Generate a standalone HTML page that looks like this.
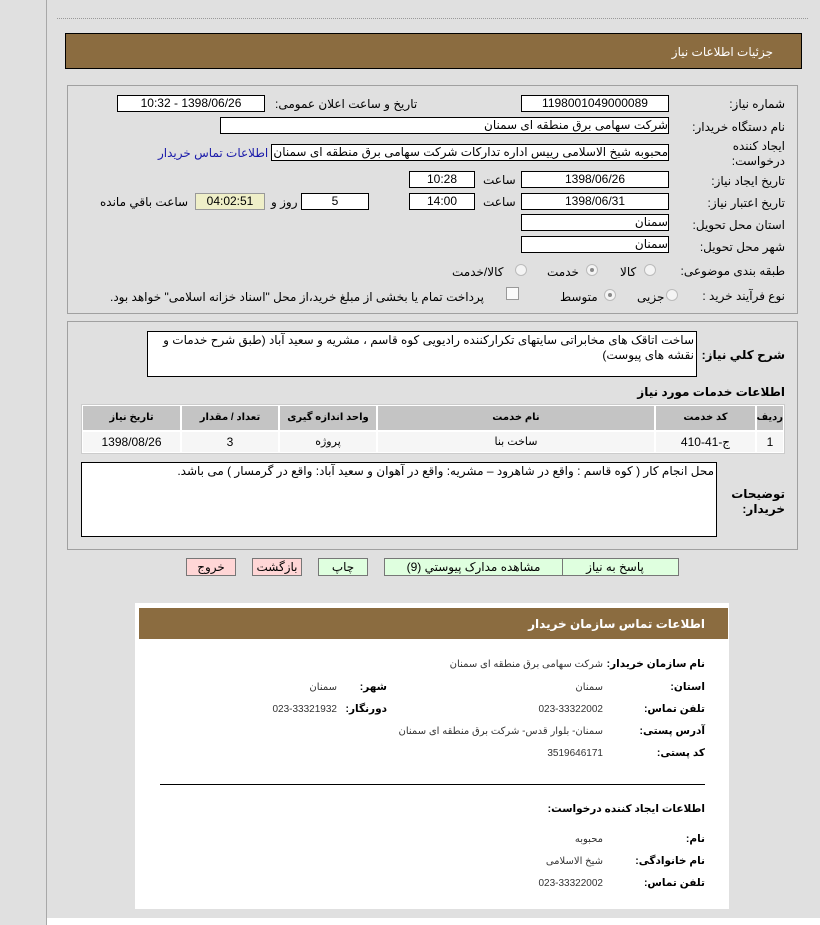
<!DOCTYPE html>
<html><head><meta charset="utf-8"><style>
*{margin:0;padding:0;box-sizing:border-box}
body{width:820px;height:925px;background:#e0e0e0;position:relative;overflow:hidden;font-family:"Liberation Sans","DejaVu Sans",sans-serif;font-size:12px;color:#000}
.a{position:absolute;white-space:nowrap}
.r{direction:rtl}
.f{position:absolute;background:#fff;border:1px solid #000;height:17px;line-height:15px;font-size:12px;white-space:nowrap;overflow:hidden;direction:rtl}
.c{text-align:center}
.lbl{position:absolute;right:35px;direction:rtl;font-size:12px;white-space:nowrap}
.rad{position:absolute;width:12px;height:12px;border-radius:50%;border:1px solid #bbb;background:#f4f4f4}
.rad.on:after{content:"";position:absolute;left:3px;top:3px;width:4px;height:4px;border-radius:50%;background:#888}
.btn{position:absolute;top:558px;height:18px;border:1px solid #777;background:#dfffdf;text-align:center;line-height:16px;font-size:12px;direction:rtl}
.pk{background:#ffd6d6}
.th{position:absolute;top:406px;height:24px;background:#c4c4c4;font-weight:bold;font-size:10px;text-align:center;line-height:24px;direction:rtl;overflow:hidden}
.td{position:absolute;top:432px;height:20px;background:#f6f6f6;text-align:center;line-height:20px;direction:rtl}
.b{font-weight:bold}
.k{position:absolute;font-weight:bold;font-size:10.5px;direction:rtl;white-space:nowrap}
.v{position:absolute;font-size:10px;color:#333;direction:rtl;white-space:nowrap}
</style></head><body>
<div class="a" style="left:46px;top:0;width:1px;height:925px;background:#a8a8a8"></div>
<div class="a" style="left:57px;top:18px;width:751px;border-top:1px dotted #999"></div>
<div class="a" style="left:65px;top:33px;width:737px;height:36px;background:#8b6c40;border:1px solid #000"></div>
<div class="a r" style="right:47px;top:45px;color:#fff;font-size:12px">جزئیات اطلاعات نیاز</div>

<div class="a" style="left:67px;top:85px;width:731px;height:229px;border:1px solid #a0a0a0"></div>
<div class="lbl" style="top:97px">شماره نیاز:</div>
<div class="f c" style="left:521px;top:95px;width:148px">1198001049000089</div>
<div class="a r" style="left:275px;top:97px">تاریخ و ساعت اعلان عمومی:</div>
<div class="f c" style="left:117px;top:95px;width:148px">1398/06/26 - 10:32</div>
<div class="lbl" style="top:120px">نام دستگاه خریدار:</div>
<div class="f" style="left:220px;top:117px;width:449px">شرکت سهامی برق منطقه ای سمنان</div>
<div class="lbl" style="top:139px;line-height:15px">ایجاد کننده<br>درخواست:</div>
<div class="f" style="left:271px;top:144px;width:398px">محبوبه شیخ الاسلامی رییس اداره تدارکات شرکت سهامی برق منطقه ای سمنان</div>
<div class="a r" style="left:158px;top:146px;color:#1a1aaa">اطلاعات تماس خریدار</div>
<div class="lbl" style="top:174px">تاریخ ایجاد نیاز:</div>
<div class="f c" style="left:521px;top:171px;width:148px">1398/06/26</div>
<div class="a r" style="left:483px;top:173px">ساعت</div>
<div class="f c" style="left:409px;top:171px;width:66px">10:28</div>
<div class="lbl" style="top:196px">تاریخ اعتبار نیاز:</div>
<div class="f c" style="left:521px;top:193px;width:148px">1398/06/31</div>
<div class="a r" style="left:483px;top:195px">ساعت</div>
<div class="f c" style="left:409px;top:193px;width:66px">14:00</div>
<div class="f c" style="left:301px;top:193px;width:68px">5</div>
<div class="a r" style="left:271px;top:195px">روز و</div>
<div class="f c" style="left:195px;top:193px;width:70px;background:#efefc8;border-color:#999">04:02:51</div>
<div class="a r" style="left:100px;top:195px">ساعت باقي مانده</div>
<div class="lbl" style="top:218px">استان محل تحویل:</div>
<div class="f" style="left:521px;top:214px;width:148px">سمنان</div>
<div class="lbl" style="top:240px">شهر محل تحویل:</div>
<div class="f" style="left:521px;top:236px;width:148px">سمنان</div>
<div class="lbl" style="top:264px">طبقه بندی موضوعی:</div>
<div class="rad" style="left:644px;top:264px"></div><div class="a r" style="left:620px;top:265px">کالا</div>
<div class="rad on" style="left:586px;top:264px"></div><div class="a r" style="left:547px;top:265px">خدمت</div>
<div class="rad" style="left:515px;top:264px"></div><div class="a r" style="left:452px;top:265px">کالا/خدمت</div>
<div class="lbl" style="top:289px">نوع فرآیند خرید :</div>
<div class="rad" style="left:666px;top:289px"></div><div class="a r" style="left:637px;top:290px">جزیی</div>
<div class="rad on" style="left:604px;top:289px"></div><div class="a r" style="left:560px;top:290px">متوسط</div>
<div class="a" style="left:506px;top:287px;width:13px;height:13px;border:1px solid #999;background:#fafafa"></div>
<div class="a r" style="left:110px;top:290px">پرداخت تمام یا بخشی از مبلغ خرید،از محل "اسناد خزانه اسلامی" خواهد بود.</div>

<div class="a" style="left:67px;top:321px;width:731px;height:229px;border:1px solid #a0a0a0"></div>
<div class="lbl b" style="top:348px;font-size:12px">شرح کلي نياز:</div>
<div class="a r" style="left:147px;top:331px;width:550px;height:46px;background:#fff;border:1px solid #000;white-space:normal;line-height:15px;padding:1px 2px">ساخت اتاقک های مخابراتی سایتهای تکرارکننده رادیویی کوه قاسم ، مشریه و سعید آباد  (طبق شرح خدمات و نقشه های پیوست)</div>
<div class="lbl b" style="top:385px">اطلاعات خدمات مورد نیاز</div>
<div class="a" style="left:81px;top:404px;width:704px;height:50px;background:#fff;border:1px solid #ccc"></div>
<div class="th" style="left:757px;width:26px">ردیف</div>
<div class="th" style="left:656px;width:99px">کد خدمت</div>
<div class="th" style="left:378px;width:276px">نام خدمت</div>
<div class="th" style="left:280px;width:96px">واحد اندازه گیری</div>
<div class="th" style="left:182px;width:96px">تعداد / مقدار</div>
<div class="th" style="left:83px;width:97px">تاریخ نیاز</div>
<div class="td" style="left:757px;width:26px">1</div>
<div class="td" style="left:656px;width:99px">ج-41-410</div>
<div class="td" style="left:378px;width:276px;font-size:11px">ساخت بنا</div>
<div class="td" style="left:280px;width:96px;font-size:11px">پروژه</div>
<div class="td" style="left:182px;width:96px">3</div>
<div class="td" style="left:83px;width:97px">1398/08/26</div>
<div class="a r" style="left:81px;top:462px;width:636px;height:75px;background:#fff;border:1px solid #000;padding:1px 2px">محل انجام کار ( کوه قاسم : واقع در شاهرود – مشریه: واقع در آهوان و سعید آباد: واقع در گرمسار ) می باشد.</div>
<div class="lbl b" style="top:487px;line-height:15px">توضیحات<br>خریدار:</div>

<div class="btn" style="left:551px;width:128px">پاسخ به نیاز</div>
<div class="btn" style="left:384px;width:179px">مشاهده مدارک پیوستي (9)</div>
<div class="btn" style="left:318px;width:50px">چاپ</div>
<div class="btn pk" style="left:252px;width:50px">بازگشت</div>
<div class="btn pk" style="left:186px;width:50px">خروج</div>

<div class="a" style="left:135px;top:603px;width:594px;height:306px;background:#fff"></div>
<div class="a" style="left:139px;top:608px;width:589px;height:31px;background:#8b6c40"></div>
<div class="a r b" style="right:115px;top:617px;color:#fff;font-size:12px">اطلاعات تماس سازمان خریدار</div>
<div class="k" style="right:115px;top:658px">نام سازمان خریدار:</div>
<div class="v" style="right:217px;top:659px">شرکت سهامی برق منطقه ای سمنان</div>
<div class="k" style="right:115px;top:681px">استان:</div>
<div class="v" style="right:217px;top:682px">سمنان</div>
<div class="k" style="right:433px;top:681px">شهر:</div>
<div class="v" style="right:483px;top:682px">سمنان</div>
<div class="k" style="right:115px;top:703px">تلفن تماس:</div>
<div class="v" style="right:217px;top:704px">023-33322002</div>
<div class="k" style="right:433px;top:703px">دورنگار:</div>
<div class="v" style="right:483px;top:704px">023-33321932</div>
<div class="k" style="right:115px;top:725px">آدرس پستی:</div>
<div class="v" style="right:217px;top:726px">سمنان- بلوار قدس- شرکت برق منطقه ای سمنان</div>
<div class="k" style="right:115px;top:747px">کد پستی:</div>
<div class="v" style="right:217px;top:748px">3519646171</div>
<div class="a" style="left:160px;top:784px;width:545px;border-top:1px solid #000"></div>
<div class="k" style="right:115px;top:803px">اطلاعات ایجاد کننده درخواست:</div>
<div class="k" style="right:115px;top:833px">نام:</div>
<div class="v" style="right:217px;top:834px">محبوبه</div>
<div class="k" style="right:115px;top:855px">نام خانوادگی:</div>
<div class="v" style="right:217px;top:856px">شیخ الاسلامی</div>
<div class="k" style="right:115px;top:877px">تلفن تماس:</div>
<div class="v" style="right:217px;top:878px">023-33322002</div>
<div class="a" style="left:47px;top:918px;width:773px;height:7px;background:#fff"></div>
</body></html>
